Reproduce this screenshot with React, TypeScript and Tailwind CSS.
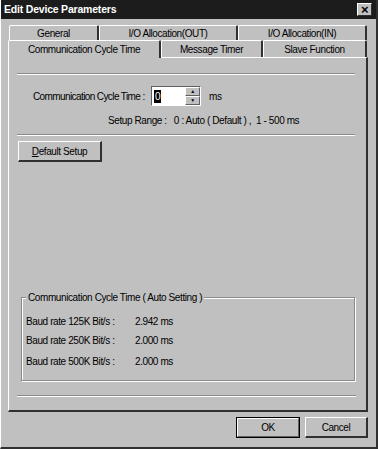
import React from "react";

const Tab = ({ label, width, selected }: { label: string; width: string; selected?: boolean }) => (
  <div
    className={`${width} ${selected ? "h-[18px] -mb-px relative z-10 bg-[#c0c0c0]" : "h-full"} flex items-center justify-center border-t border-l border-r-2 border-t-white border-l-white border-r-[#303030] rounded-t-[2px] text-black whitespace-nowrap`}
  >
    {label}
  </div>
);

const Etched = ({ className }: { className: string }) => (
  <div className={`${className} h-[2px] border-t border-b border-t-[#8a8a8a] border-b-white`} />
);

const BaudRow = ({ rate, value, className }: { rate: string; value: string; className: string }) => (
  <div className={`${className} flex whitespace-nowrap`}>
    <span className="w-[109px]">Baud rate {rate} Bit/s :</span>
    <span>{value}</span>
  </div>
);

export default function App() {
  return (
    <div
      className="w-[378px] h-[449px] bg-[#c0c0c0] text-black text-[10px] leading-[15px] tracking-[-0.4px] flex flex-col border-l border-l-white border-r-2 border-r-[#303030] border-b-2 border-b-[#303030]"
      style={{ fontFamily: '"Liberation Sans", Arial, sans-serif' }}
    >
      <div className="h-[19px] bg-[#1c1c1c] flex items-center justify-between pl-[3px] pr-[4px]">
        <span className="text-white font-bold text-[10.5px] tracking-[-0.2px]">Edit Device Parameters</span>
        <div className="w-[15px] h-[13px] bg-[#c0c0c0] border-t border-l border-t-white border-l-white border-r border-b border-r-[#303030] border-b-[#303030] flex items-center justify-center text-[13px] font-bold leading-none">
          ×
        </div>
      </div>

      <div className="flex flex-col px-[7px] pt-[6px]">
        <div className="flex h-[15px] pl-[1px]">
          <Tab label="General" width="w-[90px]" />
          <Tab label="I/O Allocation(OUT)" width="w-[139px]" />
          <Tab label="I/O Allocation(IN)" width="w-[129px]" />
        </div>
        <div className="flex h-[17px] items-end">
          <Tab label="Communication Cycle Time" width="w-[153px]" selected />
          <Tab label="Message Timer" width="w-[102px]" />
          <Tab label="Slave Function" width="w-[104px]" />
        </div>

        <div className="w-[360px] h-[355px] border-t border-l border-t-white border-l-white border-r-2 border-b-2 border-r-[#303030] border-b-[#303030] flex flex-col whitespace-nowrap">
          <Etched className="mt-[15px] ml-[8px] mr-[11px]" />

          <div className="flex items-center mt-[11px] ml-[24px] h-[20px]">
            <span className="w-[118px] tracking-[-0.6px]">Communication Cycle Time :</span>
            <div className="flex h-[20px] border-t border-l border-t-[#606060] border-l-[#606060] border-r border-b border-r-white border-b-white">
              <div className="w-[33px] bg-white flex items-center pl-[2px]">
                <span className="bg-black text-white leading-[13px] px-[1px]">0</span>
              </div>
              <div className="w-[15px] flex flex-col">
                <div className="h-[9px] bg-[#c0c0c0] border-t border-l border-t-white border-l-white border-r border-b border-r-[#606060] border-b-[#606060] flex items-center justify-center text-[5px] leading-none">▲</div>
                <div className="h-[9px] bg-[#c0c0c0] border-t border-l border-t-white border-l-white border-r border-b border-r-[#606060] border-b-[#606060] flex items-center justify-center text-[5px] leading-none">▼</div>
              </div>
            </div>
            <span className="ml-[8px]">ms</span>
          </div>

          <div className="mt-[7px] ml-[99px]">Setup Range :&nbsp;&nbsp; 0 : Auto ( Default ) ,&nbsp; 1 - 500 ms</div>

          <Etched className="mt-[6px] ml-[8px] mr-[11px]" />

          <div className="mt-[5px] ml-[9px] w-[84px] h-[21px] border-t border-l border-t-white border-l-white border-r-2 border-b-2 border-r-[#303030] border-b-[#303030] flex items-center justify-center">
            <span><span className="underline">D</span>efault Setup</span>
          </div>

          <div className="mt-[135px] ml-[12px] w-[334px] h-[84px] relative border border-[#8a8a8a] shadow-[inset_1px_1px_0_white,1px_1px_0_white] flex flex-col pl-[4px]">
            <span className="absolute -top-[8px] left-[4px] bg-[#c0c0c0] px-[2px]">Communication Cycle Time ( Auto Setting )</span>
            <BaudRow className="mt-[16px]" rate="125K" value="2.942 ms" />
            <BaudRow className="mt-[4px]" rate="250K" value="2.000 ms" />
            <BaudRow className="mt-[6px]" rate="500K" value="2.000 ms" />
          </div>

          <Etched className="mt-[14px] ml-[8px] mr-[10px]" />
        </div>

        <div className="flex justify-end gap-[5px] mt-[5px] pr-[1px]">
          <div className="w-[64px] h-[21px] border border-black flex">
            <div className="flex-1 border-t border-l border-t-white border-l-white border-r border-b border-r-[#606060] border-b-[#606060] flex items-center justify-center">OK</div>
          </div>
          <div className="w-[63px] h-[21px] border-t border-l border-t-white border-l-white border-r-2 border-b-2 border-r-[#303030] border-b-[#303030] flex items-center justify-center">
            Cancel
          </div>
        </div>
      </div>
    </div>
  );
}
